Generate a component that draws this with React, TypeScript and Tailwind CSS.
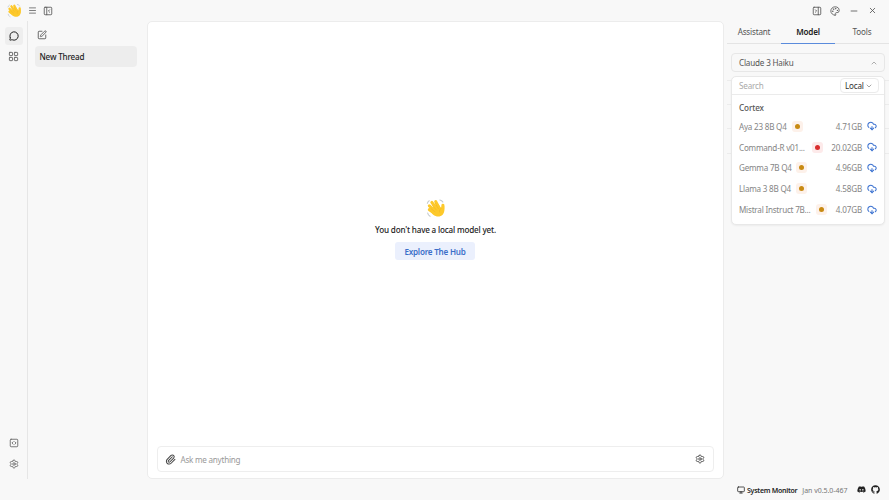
import React from "react";
import {
  Menu, PanelLeftClose, PanelRightClose, Palette, Minus, X, MessageCircle, LayoutGrid,
  SquarePen, SquareCode, Settings, Paperclip, ChevronUp, ChevronDown, CloudDownload, Monitor,
} from "lucide-react";
import { FaDiscord, FaGithub } from "react-icons/fa";

function Wave({ size }: { size: number }) {
  return (
    <svg width={size} height={size} viewBox="0 0 36 36" fill="none">
      <g stroke="#fdc92b" strokeWidth="5.500" strokeLinecap="round">
        <path d="m6 21 9 6M6 14l10 9M10.500 8l9 12M17.500 6.500l6 12M30.500 13l-1 10" />
      </g>
      <path d="M11 18 22 10.500l5.500 8 5.500-4c.8 7 .2 12-3 15.500-4.500 4.500-11.500 4.300-17.500-.5l-5-5z" fill="#fdc92b" />
      <path d="m8.800 18.800 7.200 6M11.200 13l7.300 8.500M16.500 9.500l5.700 9.500M27.800 18c-3 1.800-4 4.500-3.200 7.500" stroke="#f2b321" strokeWidth="1" strokeLinecap="round" />
      <path d="M3 27c.5 2.800 2 4.800 4.300 6M25 3.500c2.500.5 4.200 1.700 5.400 3.800M2.500 9.500c.5-2 1.500-3.500 3.300-4.500" stroke="#c3c9cd" strokeWidth="2" strokeLinecap="round" />
    </svg>
  );
}

const models = [
  { name: "Aya 23 8B Q4", size: "4.71GB", width: "w-[48.500px]", dot: "bg-[#c88a12]", halo: "bg-[#fdf1ea]" },
  { name: "Command-R v01...", size: "20.02GB", width: "w-[68.500px]", dot: "bg-[#d92d2d]", halo: "bg-[#fdeaea]" },
  { name: "Gemma 7B Q4", size: "4.96GB", width: "w-[52.500px]", dot: "bg-[#c88a12]", halo: "bg-[#fdf1ea]" },
  { name: "Llama 3 8B Q4", size: "4.58GB", width: "w-[52.500px]", dot: "bg-[#c88a12]", halo: "bg-[#fdf1ea]" },
  { name: "Mistral Instruct 7B...", size: "4.07GB", width: "w-[72.500px]", dot: "bg-[#c88a12]", halo: "bg-[#fdf1ea]" },
];

function TitleBar() {
  return (
    <header className="flex h-[21px] shrink-0 items-center justify-between pl-[7px] pr-3 text-[#555]">
      <div className="flex items-center">
        <Wave size={15} />
        <Menu size={9} strokeWidth={2} className="ml-[6px]" />
        <PanelLeftClose size={10} strokeWidth={2} className="ml-[5.500px]" />
      </div>
      <div className="flex items-center gap-[8.800px]">
        <PanelRightClose size={10} strokeWidth={2} />
        <Palette size={10} strokeWidth={2} />
        <Minus size={10} strokeWidth={2} />
        <X size={9} strokeWidth={2.200} />
      </div>
    </header>
  );
}

function ModelMenu() {
  return (
    <div className="absolute left-1 top-[55px] z-10 h-[149px] w-[154px] rounded-[5px] border border-[#e8e8e8] bg-white shadow-xs">
      <div className="flex h-[18px] items-center justify-between border-b border-[#ebebeb] pl-[7px] pr-[5px]">
        <span className="pt-px text-[#aaa]">Search</span>
        <div className="flex h-[15px] w-[39px] items-center justify-between rounded-[4px] border border-[#ebebeb] bg-white pl-1 pr-[5px] pt-px text-[#333]">
          Local <ChevronDown size={8} strokeWidth={2} className="shrink-0 text-[#777]" />
        </div>
      </div>
      <div className="flex h-[21px] items-center pl-[7px] pt-[5px] font-medium tracking-[-0.100px] text-[#555]">Cortex</div>
      {models.map((m) => (
        <div key={m.name} className="flex h-[20.800px] items-center pl-[7px] pr-[7px] text-[#858585]">
          <span className={`${m.width} whitespace-nowrap pt-px tracking-[-0.220px]`}>{m.name}</span>
          <span className={`ml-1 flex size-[11px] items-center justify-center rounded-[3px] ${m.halo}`}>
            <span className={`size-[5px] rounded-full ${m.dot}`} />
          </span>
          <span className="ml-auto pt-px tracking-[-0.160px]">{m.size}</span>
          <CloudDownload size={10} strokeWidth={2.500} className="ml-[5px] text-[#3c72d0]" />
        </div>
      ))}
    </div>
  );
}

export default function App() {
  return (
    <div className="flex h-[500px] w-[889px] flex-col overflow-hidden bg-[#f8f8f8] font-['Noto_Sans','Open_Sans',sans-serif] text-[8.100px] leading-none tracking-[-0.180px] text-[#222]">
      <TitleBar />
      <div className="flex h-[458px] shrink-0">
        <nav className="flex w-7 flex-col items-center border-r border-[#e6e6e6] pb-[10px] pt-[6px] text-[#666]">
          <div className="flex h-[18px] w-[18px] items-center justify-center rounded-[3px] bg-[#eeeeee] text-[#222]">
            <MessageCircle size={10} strokeWidth={2.400} />
          </div>
          <LayoutGrid size={11} strokeWidth={2} className="mt-[6px]" />
          <SquareCode size={10} strokeWidth={2.100} className="mt-auto" />
          <Settings size={10} strokeWidth={2.100} className="mt-[11px]" />
        </nav>
        <aside className="w-[119px] px-[7px] pt-[9px]">
          <SquarePen size={10} strokeWidth={2.100} className="ml-[1.500px] text-[#555]" />
          <div className="mt-[6px] flex h-[21px] w-[102px] items-center rounded-[4px] bg-[#ededed] pl-[4.500px] pt-[2px] font-medium">New Thread</div>
        </aside>
        <main className="flex w-[577px] flex-col rounded-[5px] border border-[#ececec] bg-white px-[9px] pb-[6px]">
          <div className="flex flex-1 flex-col items-center pt-[176px]">
            <Wave size={20} />
            <p className="mt-[8px] font-medium">You don't have a local model yet.</p>
            <button className="mr-px mt-[8px] h-[18px] w-20 rounded-[3px] bg-[#ebf0fd] pt-px font-semibold tracking-[-0.230px] text-[#3c6fc9]">Explore The Hub</button>
          </div>
          <div className="flex h-[26px] items-center rounded-[4px] border border-[#eeeeee] pl-[7px] pr-[8px] text-[#999]">
            <Paperclip size={11} strokeWidth={2.200} className="text-[#444]" />
            <span className="ml-[4.500px] pt-[2px] tracking-[-0.240px]">Ask me anything</span>
            <Settings size={10} strokeWidth={2.100} className="ml-auto text-[#444]" />
          </div>
        </main>
        <aside className="relative ml-[3px] w-[162px]">
          <div className="flex h-[23px] border-b border-[#e4e4e4] text-[#555]">
            <div className="flex w-[54px] items-center justify-center">Assistant</div>
            <div className="-mb-px flex w-[54px] items-center justify-center border-b border-[#5a8bdc] pt-px font-semibold text-[#222]">Model</div>
            <div className="flex w-[54px] items-center justify-center">Tools</div>
          </div>
          <div className="ml-1 mt-[9px] flex h-[19px] w-[154px] items-center justify-between rounded-[4px] border border-[#e7e7e7] pl-[7px] pr-[6px] text-[#555]">
            <span className="pt-px">Claude 3 Haiku</span> <ChevronUp size={8} strokeWidth={2} className="text-[#888]" />
          </div>
          <div className="mt-[8px] h-[74px] border-y border-[#ececec] pt-[23px]">
            <div className="h-[25px] border-y border-[#ececec]" />
          </div>
          <ModelMenu />
        </aside>
      </div>
      <footer className="flex h-[21px] items-center justify-end pr-[9.500px] text-[7px]">
        <Monitor size={8} strokeWidth={2.300} />
        <span className="ml-[2px] pt-px font-semibold tracking-[-0.270px]">System Monitor</span>
        <span className="ml-[5px] pt-px tracking-[-0.030px] text-[#777]">Jan v0.5.0-467</span>
        <FaDiscord size={9} className="ml-[9px]" />
        <FaGithub size={9} className="ml-[5px]" />
      </footer>
    </div>
  );
}
